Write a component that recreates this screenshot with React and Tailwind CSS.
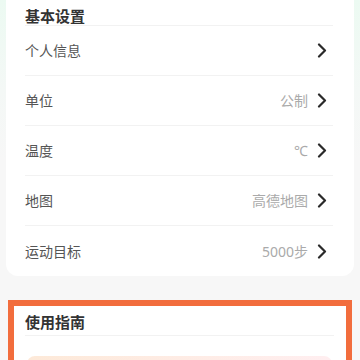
import React from 'react';

const rows = [
    { label: '个人信息', value: '' },
    { label: '单位', value: '公制' },
    { label: '温度', value: '℃' },
    { label: '地图', value: '高德地图' },
    { label: '运动目标', value: '5000步' },
];

const Chevron = () => (
    <svg width="10" height="15" viewBox="0 0 10 15" fill="none" className="shrink-0">
        <path d="M2 1.5 L8 7.5 L2 13.5" stroke="#2a2a2a" strokeWidth="2.2" strokeLinecap="round" strokeLinejoin="round" />
    </svg>
);

const App = () => {
    return (
        <div
            className="w-[360px] h-[360px] overflow-hidden bg-[linear-gradient(180deg,#ecfaf2_0px,#f4f8f6_90px,#f7f7f7_160px)] px-[6px]"
            style={{ fontFamily: '"Noto Sans", "Noto Sans CJK SC", sans-serif' }}
        >
            {/* 基本设置 */}
            <div className="bg-white rounded-b-[12px] pl-[19px] pr-[21px]">
                <div className="h-[26px] pt-[6px] border-b border-[#f2f2f2] flex items-center">
                    <span className="text-[15px] leading-[20px] font-bold text-[#333]">基本设置</span>
                </div>
                {rows.map((r, i) => (
                    <div
                        key={r.label}
                        className={`h-[50px] flex items-center justify-between ${i < rows.length - 1 ? 'border-b border-[#f2f2f2]' : ''}`}
                    >
                        <span className="text-[14px] text-[#555]">{r.label}</span>
                        <div className="flex items-center gap-[9px] mr-[6px]">
                            {r.value && <span className="text-[14px] text-[#aaa]">{r.value}</span>}
                            <Chevron />
                        </div>
                    </div>
                ))}
            </div>

            {/* 使用指南 */}
            <div className="mt-[24px] mx-[2px] border-[6px] border-[#f26d3d] bg-white pl-[11px] pr-[12px] h-[90px]">
                <div className="h-[30px] flex items-end pb-[1px] border-b border-[#f2f2f2]">
                    <span className="text-[15px] leading-[24px] font-bold text-[#333]">使用指南</span>
                </div>
                <div className="mt-[20px] ml-[2px] mr-[2px] h-[40px] rounded-[8px] bg-[linear-gradient(90deg,#fde9d8,#ffeef0)]" />
            </div>
        </div>
    );
};

export default App;
